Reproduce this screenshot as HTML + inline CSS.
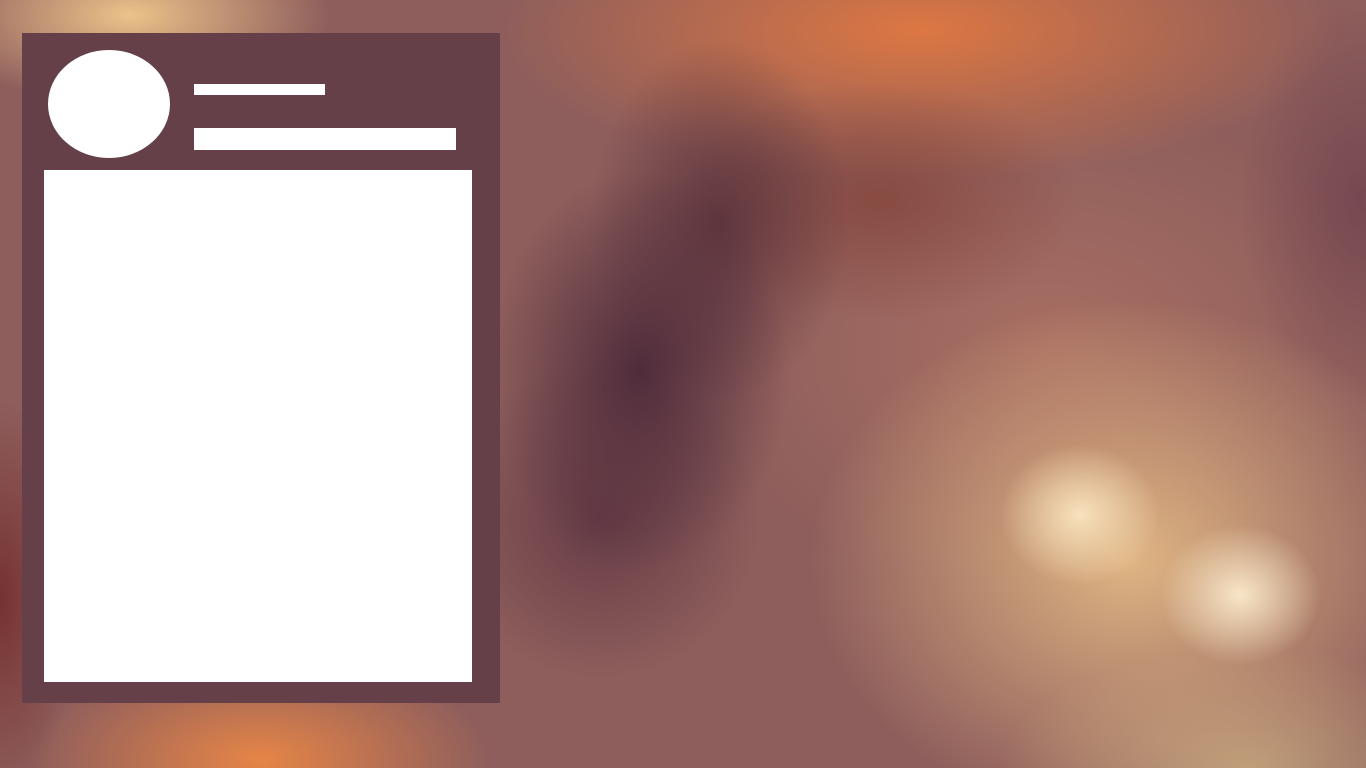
<!DOCTYPE html>
<html><head><style>
html,body{margin:0;padding:0;width:1366px;height:768px;overflow:hidden}
body{position:relative;background:#8e5e5c;
background-image:
radial-gradient(ellipse 80px 70px at 1080px 515px,#f8e2bc 0%,rgba(245,215,165,0) 100%),
radial-gradient(ellipse 80px 70px at 1240px 595px,#f8e6c8 0%,rgba(245,225,190,0) 100%),
radial-gradient(ellipse 320px 260px at 1130px 560px,rgba(232,190,135,.9) 0%,rgba(220,170,120,0) 100%),
radial-gradient(ellipse 150px 200px at 640px 370px,rgba(72,38,55,.9) 0%,rgba(80,45,60,0) 100%),
radial-gradient(ellipse 130px 180px at 720px 220px,rgba(85,45,55,.8) 0%,rgba(80,45,60,0) 100%),
radial-gradient(ellipse 160px 160px at 600px 520px,rgba(85,45,60,.7) 0%,rgba(80,45,60,0) 100%),
radial-gradient(ellipse 200px 120px at 880px 200px,rgba(130,65,55,.7) 0%,rgba(130,65,55,0) 100%),
radial-gradient(ellipse 420px 150px at 920px 30px,rgba(225,120,65,.95) 0%,rgba(220,120,70,0) 100%),
radial-gradient(ellipse 230px 110px at 260px 760px,rgba(235,135,70,.95) 0%,rgba(230,130,70,0) 100%),
radial-gradient(ellipse 200px 90px at 130px 15px,rgba(240,200,140,.95) 0%,rgba(230,190,140,0) 100%),
radial-gradient(ellipse 80px 200px at 0px 600px,rgba(115,45,45,.9) 0%,rgba(115,45,45,0) 100%),
radial-gradient(ellipse 120px 200px at 1360px 200px,rgba(115,70,80,.9) 0%,rgba(115,70,80,0) 100%),
radial-gradient(ellipse 250px 120px at 1250px 768px,rgba(195,165,125,.85) 0%,rgba(190,160,120,0) 100%),
radial-gradient(ellipse 350px 250px at 1050px 350px,rgba(175,115,100,.8) 0%,rgba(175,115,100,0) 100%);
}
.card{position:absolute;left:22px;top:33px;width:478px;height:670px;background:#654049}
.w{position:absolute;background:#fff}
</style></head><body>
<div class="card"></div>
<div class="w" style="left:48px;top:50px;width:122px;height:108px;border-radius:50%"></div>
<div class="w" style="left:194px;top:84px;width:131px;height:11px"></div>
<div class="w" style="left:194px;top:128px;width:262px;height:22px"></div>
<div class="w" style="left:44px;top:170px;width:428px;height:512px"></div>
</body></html>
